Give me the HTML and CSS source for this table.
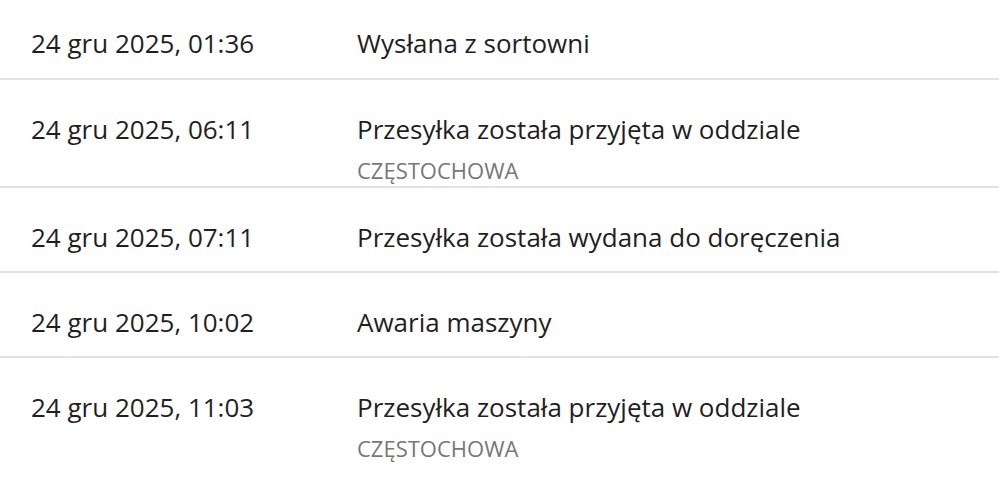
FILE: index.html
```html
<!DOCTYPE html>
<html lang="pl">
<head>
<meta charset="utf-8">
<link rel="stylesheet" href="styles.css">
</head>
<body>
<div class="list">
  <div class="row first">
    <div class="date">24 gru 2025, 01:36</div>
    <div class="desc"><div class="title">Wysłana z sortowni</div></div>
  </div>
  <div class="row with-sub">
    <div class="date">24 gru 2025, 06:11</div>
    <div class="desc"><div class="title">Przesyłka została przyjęta w oddziale</div><div class="sub">CZĘSTOCHOWA</div></div>
  </div>
  <div class="row">
    <div class="date">24 gru 2025, 07:11</div>
    <div class="desc"><div class="title">Przesyłka została wydana do doręczenia</div></div>
  </div>
  <div class="row">
    <div class="date">24 gru 2025, 10:02</div>
    <div class="desc"><div class="title">Awaria maszyny</div></div>
  </div>
  <div class="row with-sub last">
    <div class="date">24 gru 2025, 11:03</div>
    <div class="desc"><div class="title">Przesyłka została przyjęta w oddziale</div><div class="sub">CZĘSTOCHOWA</div></div>
  </div>
</div>
</body>
</html>
```
FILE: styles.css
```css
html, body {
  margin: 0;
  padding: 0;
  background: #fff;
}
body {
  font-family: "Open Sans", "Liberation Sans", sans-serif;
  color: #1f1f1f;
}
.list {
  display: flex;
  flex-direction: column;
}
.row {
  display: grid;
  grid-template-columns: 326px 1fr;
  padding: 31px 0 16px 31px;
  border-bottom: 2px solid #e2e2e2;
  font-size: 26px;
  line-height: 36px;
}
.row.first {
  padding-top: 25px;
  padding-bottom: 17px;
}
.row.with-sub {
  padding-bottom: 3px;
}
.row.last {
  border-bottom: none;
}
.sub {
  font-size: 22px;
  line-height: 26px;
  color: #777;
  margin-top: 10px;
}
```
